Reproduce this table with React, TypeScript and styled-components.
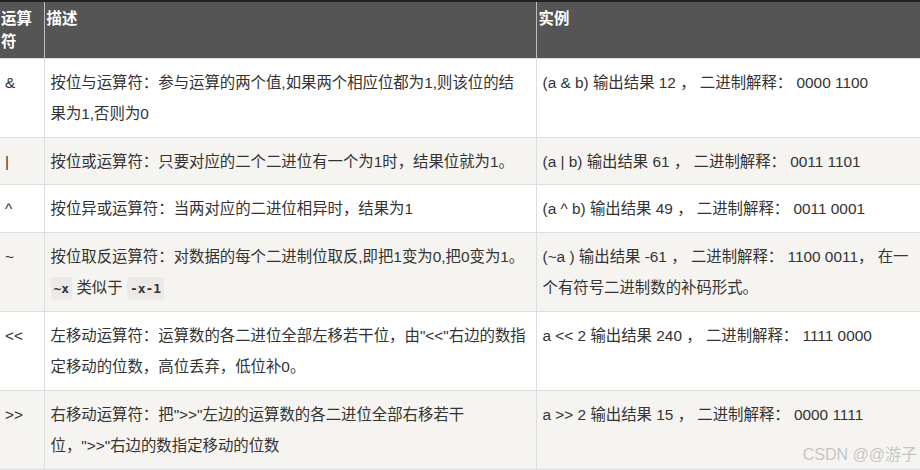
import React from "react";
import styled, { createGlobalStyle } from "styled-components";

const Global = createGlobalStyle`
  html, body { margin: 0; padding: 0; background: #fff; overflow: hidden; }
  body { width: 920px; height: 470px; }
`;

const Page = styled.div`
  position: relative;
  width: 920px;
  height: 470px;
  overflow: hidden;
  font-family: "Liberation Sans", "Noto Sans CJK SC", sans-serif;
  color: #333;
`;

const TopStrip = styled.div`
  height: 2px;
  background: #202226;
`;

const Table = styled.table`
  width: 924px;
  table-layout: fixed;
  border-collapse: collapse;
  font-size: 15.4px;
`;

const HeadCell = styled.th<{ $w?: number }>`
  box-sizing: border-box;
  ${(p) => (p.$w ? `width: ${p.$w}px;` : "")}
  background: #555;
  color: #fff;
  font-weight: bold;
  text-align: left;
  vertical-align: top;
  line-height: 23px;
  padding: 5px 2px;
  border-left: 1px solid #bdbdbd;
  border-bottom: 1px solid #ddd;
  &:first-child { border-left: none; padding-left: 1px; }
`;

const Row = styled.tr<{ $alt: boolean }>`
  background: ${(p) => (p.$alt ? "#f6f4f0" : "#fff")};
`;

const Cell = styled.td<{ $padRight?: number }>`
  box-sizing: border-box;
  vertical-align: top;
  line-height: 31px;
  padding: 8px ${(p) => p.$padRight ?? 6}px 7.6px 6px;
  border-left: 1px solid #ddd;
  border-bottom: 1px solid #ddd;
  &:first-child { border-left: none; padding-left: 5px; padding-right: 2px; }
`;

const Code = styled.code`
  font-family: "DejaVu Sans Mono", "Liberation Mono", monospace;
  font-weight: bold;
  font-size: 13px;
  background: #ebeae7;
  border-radius: 3px;
  padding: 4px 3px;
  color: #333;
`;

const Watermark = styled.div`
  position: absolute;
  right: 3px;
  bottom: 6px;
  font-size: 16px;
  line-height: 18px;
  color: #c4c4c4;
  text-shadow: 0 0 1px rgba(255, 255, 255, 0.8);
  font-family: "Liberation Sans", "Noto Sans CJK SC", sans-serif;
`;

type RowData = { op: string; desc: React.ReactNode; example: string };

const rows: RowData[] = [
  {
    op: "&",
    desc: "按位与运算符：参与运算的两个值,如果两个相应位都为1,则该位的结果为1,否则为0",
    example: "(a & b) 输出结果 12 ， 二进制解释： 0000 1100",
  },
  {
    op: "|",
    desc: "按位或运算符：只要对应的二个二进位有一个为1时，结果位就为1。",
    example: "(a | b) 输出结果 61 ， 二进制解释： 0011 1101",
  },
  {
    op: "^",
    desc: "按位异或运算符：当两对应的二进位相异时，结果为1",
    example: "(a ^ b) 输出结果 49 ， 二进制解释： 0011 0001",
  },
  {
    op: "~",
    desc: (
      <>
        按位取反运算符：对数据的每个二进制位取反,即把1变为0,把0变为1。<Code>~x</Code> 类似于 <Code>-x-1</Code>
      </>
    ),
    example: "(~a ) 输出结果 -61 ， 二进制解释： 1100 0011， 在一个有符号二进制数的补码形式。",
  },
  {
    op: "<<",
    desc: "左移动运算符：运算数的各二进位全部左移若干位，由\"<<\"右边的数指定移动的位数，高位丢弃，低位补0。",
    example: "a << 2 输出结果 240 ， 二进制解释： 1111 0000",
  },
  {
    op: ">>",
    desc: "右移动运算符：把\">>\"左边的运算数的各二进位全部右移若干位，\">>\"右边的数指定移动的位数",
    example: "a >> 2 输出结果 15 ， 二进制解释： 0000 1111",
  },
];

export default function App() {
  return (
    <Page>
      <Global />
      <TopStrip />
      <Table>
        <thead>
          <tr>
            <HeadCell $w={44}>运算符</HeadCell>
            <HeadCell $w={492}>描述</HeadCell>
            <HeadCell>实例</HeadCell>
          </tr>
        </thead>
        <tbody>
          {rows.map((r, i) => (
            <Row key={i} $alt={i % 2 === 1}>
              <Cell>{r.op}</Cell>
              <Cell $padRight={8}>{r.desc}</Cell>
              <Cell>{r.example}</Cell>
            </Row>
          ))}
        </tbody>
      </Table>
      <Watermark>CSDN @@游子</Watermark>
    </Page>
  );
}
